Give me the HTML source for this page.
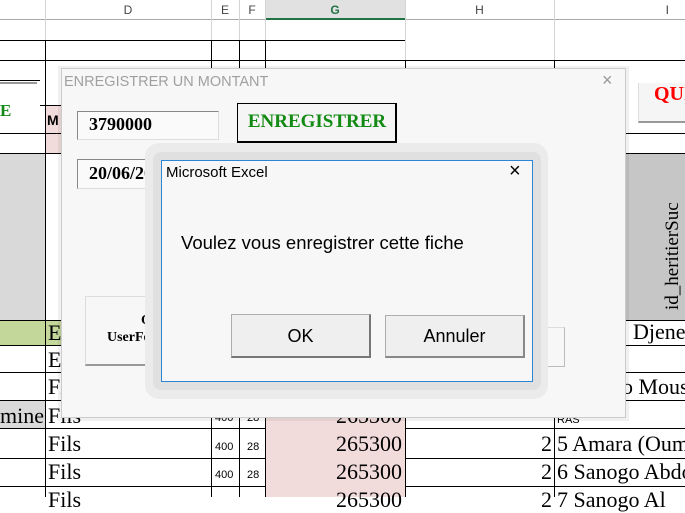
<!DOCTYPE html><html><head><style>
*{margin:0;padding:0;box-sizing:border-box}
body{width:685px;height:497px;overflow:hidden;background:#fff;position:relative;font-family:"Liberation Serif",serif}
.a{position:absolute}
.hl{position:absolute;height:1px;background:#000}
.vl{position:absolute;width:1px;background:#000}
.gl{position:absolute;background:#d4d4d4}
.ch{position:absolute;top:0;height:20px;font:12px "Liberation Sans",sans-serif;color:#444;text-align:center;line-height:20px}
.t{position:absolute;font-size:22px;color:#000;line-height:26px}
.r{position:absolute;font-size:22px;color:#000;text-align:right;line-height:26px}
.s{position:absolute;font:11px "Liberation Sans",sans-serif}
</style></head><body>
<div class="a" style="left:0;top:0;width:685px;height:20px;background:#fff;border-bottom:1px solid #aaa"></div>
<div class="a" style="left:265px;top:0;width:140px;height:20px;background:#e1e1e1;border-bottom:2px solid #217346"></div>
<div class="ch" style="left:45px;width:166px">D</div>
<div class="ch" style="left:211px;width:28px">E</div>
<div class="ch" style="left:239px;width:26px">F</div>
<div class="ch" style="left:265px;width:140px;color:#217346;font-weight:bold">G</div>
<div class="ch" style="left:405px;width:149px">H</div>
<div class="ch" style="left:554px;width:131px;text-align:right;padding-right:16px">I</div>
<div class="gl" style="left:45px;top:0;width:1px;height:40px"></div>
<div class="gl" style="left:211px;top:0;width:1px;height:40px"></div>
<div class="gl" style="left:239px;top:0;width:1px;height:40px"></div>
<div class="gl" style="left:265px;top:0;width:1px;height:40px"></div>
<div class="gl" style="left:405px;top:0;width:1px;height:497px"></div>
<div class="gl" style="left:554px;top:0;width:1px;height:60px"></div>
<div class="a" style="left:0;top:153px;width:45px;height:167px;background:#d9d9d9"></div>
<div class="a" style="left:626px;top:153px;width:59px;height:167px;background:#c6c6c6"></div>
<div class="a" style="left:45px;top:105px;width:20px;height:48px;background:#f2dcdb"></div>
<div class="a" style="left:47px;top:112px;font:bold 14px 'Liberation Sans',sans-serif">M</div>
<div class="a" style="left:663px;top:310px;transform:rotate(-90deg);transform-origin:0 0;font-size:19px;white-space:nowrap;line-height:20px">id_heritierSuc</div>
<div class="hl" style="left:0;top:40px;width:405px"></div>
<div class="hl" style="left:0;top:60px;width:685px"></div>
<div class="hl" style="left:0;top:80px;width:40px"></div>
<div class="a" style="left:0;top:82px;width:37px;height:2px;background:#999"></div>
<div class="hl" style="left:40px;top:105px;width:25px"></div>
<div class="hl" style="left:0;top:133px;width:685px"></div>
<div class="hl" style="left:0;top:153px;width:685px"></div>
<div class="hl" style="left:0;top:320px;width:685px"></div>
<div class="hl" style="left:0;top:345px;width:685px"></div>
<div class="hl" style="left:0;top:372px;width:685px"></div>
<div class="hl" style="left:0;top:400px;width:685px"></div>
<div class="hl" style="left:0;top:428px;width:685px"></div>
<div class="hl" style="left:0;top:458px;width:685px"></div>
<div class="hl" style="left:0;top:486px;width:685px"></div>
<div class="vl" style="left:45px;top:40px;height:457px"></div>
<div class="vl" style="left:211px;top:40px;height:457px"></div>
<div class="vl" style="left:239px;top:40px;height:457px"></div>
<div class="vl" style="left:265px;top:40px;height:457px"></div>
<div class="vl" style="left:405px;top:60px;height:437px"></div>
<div class="vl" style="left:554px;top:60px;height:437px"></div>
<div class="a" style="left:0;top:101px;font:bold 17px 'Liberation Serif',serif;color:#138a13">E</div>
<div class="a" style="left:0;top:321px;width:45px;height:24px;background:#c4d79b"></div>
<div class="a" style="left:46px;top:321px;width:16px;height:24px;background:#c4d79b"></div>
<div class="a" style="left:0;top:401px;width:45px;height:27px;background:#d9d9d9"></div>
<div class="t" style="left:48px;top:320px">E</div>
<div class="t" style="left:48px;top:347px">E</div>
<div class="t" style="left:48px;top:374px">Fils</div>
<div class="t" style="left:0;top:403px">mine</div>
<div class="t" style="left:48px;top:403px">Fils</div>
<div class="t" style="left:48px;top:431px">Fils</div>
<div class="t" style="left:48px;top:459px">Fils</div>
<div class="t" style="left:48px;top:487px">Fils</div>
<div class="a" style="left:266px;top:401px;width:139px;height:96px;background:#f2dcdb"></div>
<div class="s" style="left:215px;top:412px">400</div><div class="s" style="left:247px;top:412px">28</div>
<div class="s" style="left:215px;top:441px">400</div><div class="s" style="left:247px;top:441px">28</div>
<div class="s" style="left:215px;top:469px">400</div><div class="s" style="left:247px;top:469px">28</div>
<div class="r" style="left:266px;width:136px;top:403px">265300</div>
<div class="r" style="left:266px;width:136px;top:431px">265300</div>
<div class="r" style="left:266px;width:136px;top:459px">265300</div>
<div class="r" style="left:266px;width:136px;top:487px">265300</div>
<div class="r" style="left:406px;width:146px;top:431px">2</div>
<div class="r" style="left:406px;width:146px;top:459px">2</div>
<div class="r" style="left:406px;width:146px;top:487px">2</div>
<div class="s" style="left:557px;top:414px">RAS</div>
<div class="t" style="left:557px;top:431px;white-space:nowrap">5 Amara (Ouma</div>
<div class="t" style="left:557px;top:459px;white-space:nowrap">6 Sanogo Abdo</div>
<div class="t" style="left:557px;top:487px;white-space:nowrap">7 Sanogo Al</div>
<div class="t" style="left:633px;top:319px">Djene</div>
<div class="t" style="left:622px;top:374px;white-space:nowrap">o Mous</div>
<div class="a" style="left:638px;top:83px;width:60px;height:40px;background:#f5f5f5;border-left:1px solid #ddd;border-bottom:2px solid #999"></div>
<div class="a" style="left:654px;top:83px;font:bold 20px 'Liberation Serif',serif;color:#f00">QUI</div>
<!-- userform -->
<div class="a" style="left:58px;top:66px;width:571px;height:355px;background:rgba(0,0,0,.06)"></div>
<div class="a" style="left:61px;top:68px;width:565px;height:350px;background:#f7f7f7;border:1px solid #ccc"></div>
<div class="a" style="left:64px;top:74px;font:14.5px 'Liberation Sans',sans-serif;color:#a0a0a0">ENREGISTRER UN MONTANT</div>
<div class="a" style="left:602px;top:70px;font:18px 'Liberation Sans',sans-serif;color:#999">×</div>
<div class="a" style="left:77px;top:111px;width:142px;height:29px;background:#fafafa;border:1px solid #ddd;border-left-color:#888;border-top-color:#888"></div>
<div class="a" style="left:89px;top:114px;font:bold 18px 'Liberation Serif',serif">3790000</div>
<div class="a" style="left:237px;top:103px;width:160px;height:40px;background:#f5f5f5;border:1px solid #000;border-right-width:2px;border-bottom-width:2px"></div>
<div class="a" style="left:237px;top:111px;width:160px;text-align:center;font:bold 19px 'Liberation Serif',serif;color:#138a13">ENREGISTRER</div>
<div class="a" style="left:77px;top:159px;width:100px;height:30px;background:#fafafa;border:1px solid #ddd;border-left-color:#888;border-top-color:#888"></div>
<div class="a" style="left:89px;top:163px;font:bold 18px 'Liberation Serif',serif">20/06/20</div>
<div class="a" style="left:85px;top:296px;width:80px;height:70px;background:#f7f7f7;border:1px solid #ddd;border-bottom:2px solid #999"></div>
<div class="a" style="left:141px;top:313px;font:bold 14px 'Liberation Serif',serif">Ou</div>
<div class="a" style="left:107px;top:330px;font:bold 14px 'Liberation Serif',serif">UserFor</div>
<div class="a" style="left:520px;top:327px;width:45px;height:40px;background:#f7f7f7;border-right:1px solid #bbb;border-bottom:1px solid #bbb;border-top:1px solid #ddd"></div>
<div class="a" style="left:530px;top:335px;font:bold 19px 'Liberation Serif',serif;color:#f00">R</div>
<!-- msgbox -->
<div class="a" style="left:145px;top:143px;width:403px;height:256px;background:#ebebeb;border-radius:14px"></div>
<div class="a" style="left:153px;top:152px;width:388px;height:238px;background:#e0e0e0;border-radius:8px"></div>
<div class="a" style="left:161px;top:160px;width:372px;height:222px;background:#f7f7f7;border:1px solid #2b86d8"></div>
<div class="a" style="left:166px;top:164px;font:15px 'Liberation Sans',sans-serif;color:#000">Microsoft Excel</div>
<div class="a" style="left:509px;top:160px;font:20px 'Liberation Sans',sans-serif">×</div>
<div class="a" style="left:181px;top:232px;font:18.5px 'Liberation Sans',sans-serif;color:#000">Voulez vous enregistrer cette fiche</div>
<div class="a" style="left:231px;top:314px;width:140px;height:44px;background:#efefef;border:1px solid #adadad;border-right:2px solid #777;border-bottom:2px solid #777;font:18px 'Liberation Sans',sans-serif;text-align:center;line-height:42px">OK</div>
<div class="a" style="left:385px;top:315px;width:140px;height:43px;background:#efefef;border:1px solid #adadad;border-right:2px solid #888;border-bottom:2px solid #888;font:18px 'Liberation Sans',sans-serif;text-align:center;line-height:40px">Annuler</div>
</body></html>
